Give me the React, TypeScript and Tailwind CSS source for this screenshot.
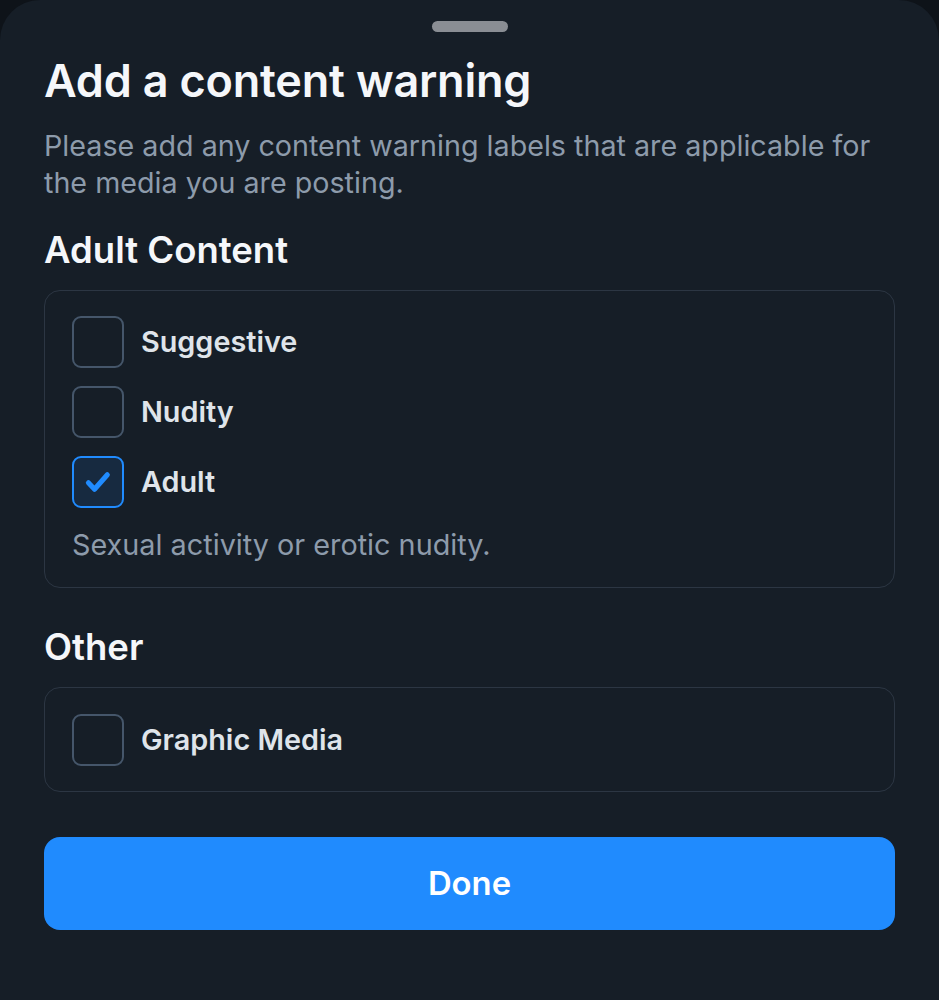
import React from "react";

function Box({ checked }: { checked?: boolean }) {
  return checked ? (
    <div className="w-[52px] h-[52px] rounded-[9px] border-2 border-[#208bfe] bg-[#172a40] flex items-center justify-center shrink-0">
      <svg width="32" height="32" viewBox="0 0 24 24" fill="none">
        <path d="M4.8 12.6l4.6 4.8L19 6.6" stroke="#208bfe" strokeWidth="3.8" strokeLinecap="round" strokeLinejoin="round" />
      </svg>
    </div>
  ) : (
    <div className="w-[52px] h-[52px] rounded-[9px] border-2 border-[#45566a] shrink-0" />
  );
}

function Row({ label, checked }: { label: string; checked?: boolean }) {
  return (
    <div className="flex items-center gap-[17px] h-[52px]">
      <Box checked={checked} />
      <span className="text-[28.8px] font-semibold text-[#dfe4ea]">{label}</span>
    </div>
  );
}

export default function App() {
  return (
    <div className="w-[939px] h-[1000px] bg-[#0e1319] overflow-hidden" style={{ fontFamily: "Inter, 'Noto Sans', sans-serif" }}>
      <div className="h-full bg-[#161e27] rounded-t-[40px] px-[44px] flex flex-col">
        <div className="flex justify-center pt-[21px]">
          <div className="w-[76px] h-[11px] rounded-full bg-[#8a8e94]" />
        </div>
        <h1 className="mt-[22px] text-[45px] leading-[54px] font-semibold text-[#f5f7fa] tracking-[-0.2px]">Add a content warning</h1>
        <p className="mt-[19px] text-[28.7px] leading-[37px] text-[#8d9bab]">
          Please add any content warning labels that are applicable for the media you are posting.
        </p>
        <h2 className="mt-[27px] text-[36.5px] leading-[44px] font-semibold text-[#f5f7fa]">Adult Content</h2>
        <div className="mt-[18px] border border-[#2c3643] rounded-[16px] px-[27px] pt-[25px] pb-[23px] flex flex-col">
          <div className="flex flex-col gap-[18px]">
            <Row label="Suggestive" />
            <Row label="Nudity" />
            <Row label="Adult" checked />
          </div>
          <p className="mt-[18px] text-[28.8px] leading-[38px] text-[#8d9bab]">Sexual activity or erotic nudity.</p>
        </div>
        <h2 className="mt-[37px] text-[36.5px] leading-[44px] font-semibold text-[#f5f7fa]">Other</h2>
        <div className="mt-[18px] border border-[#2c3643] rounded-[16px] px-[27px] pt-[26px] pb-[25px]">
          <Row label="Graphic Media" />
        </div>
        <button className="mt-[45px] h-[93px] w-full rounded-[16px] bg-[#208bfe] text-white text-[32.8px] font-semibold">Done</button>
      </div>
    </div>
  );
}
